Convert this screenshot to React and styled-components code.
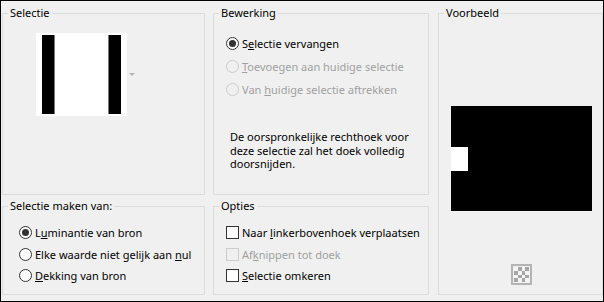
import React from 'react'
import styled, { createGlobalStyle } from 'styled-components'

const Global = createGlobalStyle`
  body {
    margin: 0;
    background: #f0f0f0;
    font-family: "Noto Sans", "Liberation Sans", sans-serif;
  }
`

const Dialog = styled.div`
  width: 604px;
  height: 302px;
  box-sizing: border-box;
  border: 1px solid #000;
  background: #f0f0f0;
  padding: 4px 0 5px 1px;
  display: grid;
  grid-template-columns: 203px 216px 1fr;
  grid-template-rows: 190px 97px;
  column-gap: 8px;
  row-gap: 3px;
  font-size: 11px;
  color: #000;
`

const Group = styled.fieldset`
  margin: 0;
  min-width: 0;
  box-sizing: border-box;
  border: 1px solid #dcdcdc;
  padding: 0;
  ${p => p.$tall && 'grid-column: 3; grid-row: 1 / 3; margin-left: 1px;'}
`

const Title = styled.legend`
  margin-left: 5px;
  padding: 0 2px;
  line-height: 16px;
`

const Body = styled.div`
  padding: ${p => p.$pad || '0'};
  ${p => p.$center && 'display: flex; flex-direction: column; align-items: center;'}
`

/* selectie thumbnail */
const ThumbRow = styled.div`
  display: flex;
  align-items: center;
  gap: 2px;
`

const Thumb = styled.div`
  width: 91px;
  height: 83px;
  box-sizing: border-box;
  background: #fff;
  padding: 2px 6px;
  display: flex;
  justify-content: space-between;
`

const Bar = styled.div`
  width: 13px;
  background: #000;
  box-sizing: border-box;
  ${p => p.$side === 'left' ? 'border-right: 1px solid #7a7a7a;' : 'border-left: 1px solid #7a7a7a;'}
`

const DropArrow = styled.div`
  width: 0;
  height: 0;
  border-left: 3px solid transparent;
  border-right: 3px solid transparent;
  border-top: 3px solid #b4b4b4;
`

/* options */
const List = styled.div`
  display: flex;
  flex-direction: column;
`

const Option = styled.div`
  display: flex;
  align-items: center;
  gap: 3px;
  height: ${p => p.$h}px;
  white-space: nowrap;
  color: ${p => (p.$disabled ? '#a0a0a0' : '#000')};

  u {
    text-underline-offset: 1px;
  }
`

const RadioMark = styled.span`
  flex: none;
  width: 13px;
  height: 13px;
  box-sizing: border-box;
  border-radius: 50%;
  border: 1px solid ${p => (p.$disabled ? '#cccccc' : '#333')};
  background: ${p => (p.$disabled ? '#f0f0f0' : '#fff')};
  display: flex;
  align-items: center;
  justify-content: center;

  &::after {
    content: '';
    display: ${p => (p.$checked ? 'block' : 'none')};
    width: 7px;
    height: 7px;
    border-radius: 50%;
    background: #333;
  }
`

const CheckMark = styled.span`
  flex: none;
  width: 13px;
  height: 13px;
  box-sizing: border-box;
  border: 1px solid ${p => (p.$disabled ? '#cccccc' : '#333')};
  background: ${p => (p.$disabled ? '#f0f0f0' : '#fff')};
`

const Note = styled.p`
  margin: 29px 0 0 4px;
  width: 190px;
  line-height: 13.5px;
`

/* voorbeeld */
const Preview = styled.div`
  margin-top: 85px;
  width: 141px;
  height: 105px;
  background: #000;
  display: flex;
  align-items: center;
`

const Chunk = styled.div`
  width: 17px;
  height: 24px;
  background: #fff;
`

const CheckerBtn = styled.div`
  margin-top: 53px;
  width: 21px;
  height: 21px;
  box-sizing: border-box;
  border: 2px solid #b4b4b4;
  background: #f0f0f0;
  padding: 1px;
  display: grid;
  grid-template-columns: repeat(4, 1fr);
  grid-template-rows: repeat(4, 1fr);
`

const Cell = styled.span`
  background: ${p => (p.$dark ? '#a6a6a6' : '#f4f4f4')};
`

const Radio = ({ checked, disabled, h, children }) => (
  <Option $h={h} $disabled={disabled}>
    <RadioMark $checked={checked} $disabled={disabled} />
    <span>{children}</span>
  </Option>
)

const Check = ({ disabled, h, children }) => (
  <Option $h={h} $disabled={disabled}>
    <CheckMark $disabled={disabled} />
    <span>{children}</span>
  </Option>
)

export default function App() {
  const cells = []
  for (let r = 0; r < 4; r++) {
    for (let c = 0; c < 4; c++) {
      cells.push(<Cell key={r * 4 + c} $dark={(r + c) % 2 === 1} />)
    }
  }

  return (
    <>
      <Global />
      <Dialog>
        <Group>
          <Title>Selectie</Title>
          <Body $pad="12px 0 0 33px">
            <ThumbRow>
              <Thumb>
                <Bar $side="left" />
                <Bar $side="right" />
              </Thumb>
              <DropArrow />
            </ThumbRow>
          </Body>
        </Group>

        <Group>
          <Title>Bewerking</Title>
          <Body $pad="11px 0 0 12px">
            <List>
              <Radio h={23} checked>S<u>e</u>lectie vervangen</Radio>
              <Radio h={23} disabled><u>T</u>oevoegen aan huidige selectie</Radio>
              <Radio h={23} disabled>Van <u>h</u>uidige selectie aftrekken</Radio>
            </List>
            <Note>
              De oorspronkelijke rechthoek voor deze selectie zal het doek volledig doorsnijden.
            </Note>
          </Body>
        </Group>

        <Group $tall>
          <Title>Voorbeeld</Title>
          <Body $center $pad="0 0 0 2px">
            <Preview>
              <Chunk />
            </Preview>
            <CheckerBtn>{cells}</CheckerBtn>
          </Body>
        </Group>

        <Group>
          <Title>Selectie maken van:</Title>
          <Body $pad="8px 0 0 16px">
            <List>
              <Radio h={21.5} checked>L<u>u</u>minantie van bron</Radio>
              <Radio h={21.5}>Elke waarde niet gelijk aan <u>n</u>ul</Radio>
              <Radio h={21.5}><u>D</u>ekking van bron</Radio>
            </List>
          </Body>
        </Group>

        <Group>
          <Title>Opties</Title>
          <Body $pad="8px 0 0 12px">
            <List>
              <Check h={21.5}>Naar <u>l</u>inkerbovenhoek verplaatsen</Check>
              <Check h={21.5} disabled>Af<u>k</u>nippen tot doek</Check>
              <Check h={21.5}><u>S</u>electie omkeren</Check>
            </List>
          </Body>
        </Group>
      </Dialog>
    </>
  )
}
